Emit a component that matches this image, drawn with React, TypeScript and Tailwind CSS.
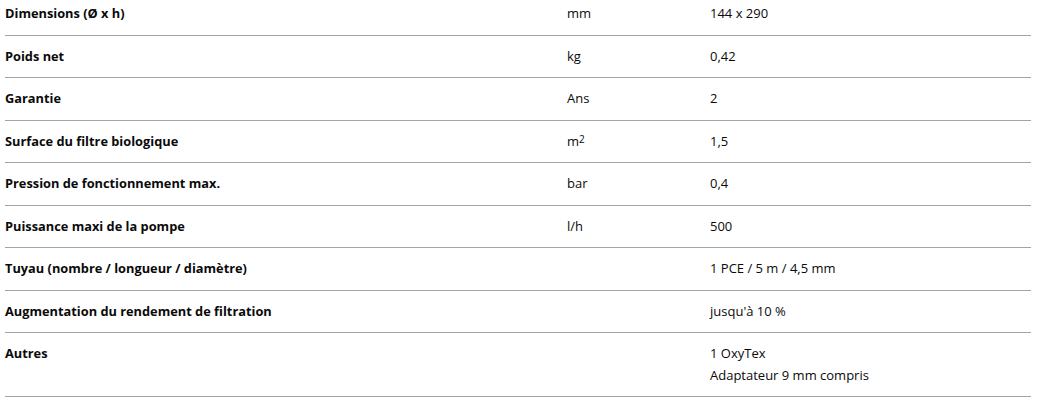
import React from "react";

const rows: { label: string; unit: React.ReactNode; value: React.ReactNode }[] = [
  { label: "Dimensions (Ø x h)", unit: "mm", value: "144 x 290" },
  { label: "Poids net", unit: "kg", value: "0,42" },
  { label: "Garantie", unit: "Ans", value: "2" },
  {
    label: "Surface du filtre biologique",
    unit: (
      <span>
        m<sup className="text-[10px] relative top-[-3px]">2</sup>
      </span>
    ),
    value: "1,5",
  },
  { label: "Pression de fonctionnement max.", unit: "bar", value: "0,4" },
  { label: "Puissance maxi de la pompe", unit: "l/h", value: "500" },
  { label: "Tuyau (nombre / longueur / diamètre)", unit: "", value: "1 PCE / 5 m / 4,5 mm" },
  { label: "Augmentation du rendement de filtration", unit: "", value: "jusqu'à 10 %" },
  {
    label: "Autres",
    unit: "",
    value: (
      <div className="flex flex-col">
        <span>1 OxyTex</span>
        <span>Adaptateur 9 mm compris</span>
      </div>
    ),
  },
];

export default function App() {
  return (
    <div className="w-[1040px] h-[409px] overflow-hidden bg-white font-['Open_Sans',sans-serif] text-[13px] text-[#0a0a0a]">
      <div className="mx-[5px] w-[1026px] mt-[-7px]">
        {rows.map((r, i) => (
          <div key={i} className="flex border-b border-[#9aa6ae] py-[10px] leading-[21.5px]">
            <div className="w-[562px] font-bold text-[12.8px]">{r.label}</div>
            <div className="w-[143px]">{r.unit}</div>
            <div className="flex-1">{r.value}</div>
          </div>
        ))}
      </div>
    </div>
  );
}
